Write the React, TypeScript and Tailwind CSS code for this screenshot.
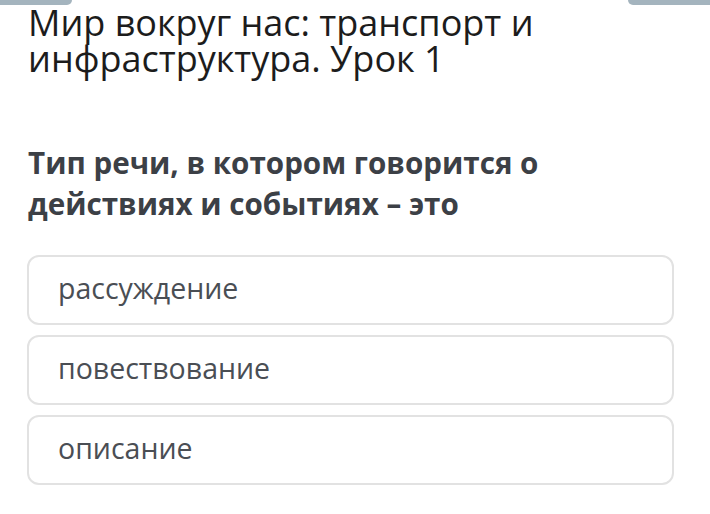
import React from "react";

export default function App() {
  const options = ["рассуждение", "повествование", "описание"];
  return (
    <div className="relative w-[710px] h-[514px] bg-white overflow-hidden" style={{ fontFamily: '"Open Sans", "Noto Sans", sans-serif' }}>
      <div className="absolute left-0 top-0 w-[72px] h-[5px] bg-[#a4b4be] rounded-br-[6px]" />
      <div className="absolute right-0 top-0 w-[82px] h-[5px] bg-[#a4b4be] rounded-bl-[6px]" />
      <div className="pl-[28px] pr-[36px]">
        <h1 className="mt-[5px] text-[36px] leading-[36px] text-[#1c1c1c] font-normal">
          Мир вокруг нас: транспорт и<br />инфраструктура. Урок 1
        </h1>
        <p className="mt-[65px] text-[29.6px] leading-[41px] font-bold text-[#3c4046]">
          Тип речи, в котором говорится о<br />действиях и событиях – это
        </p>
        <div className="mt-[31px] flex flex-col gap-[10px]">
          {options.map((o) => (
            <div key={o} className="h-[70px] w-[647px] -ml-[1px] border-2 border-[#e2e2e2] rounded-[12px] flex items-center pl-[29px] pb-[4px] text-[28.5px] text-[#4a4e54]">
              {o}
            </div>
          ))}
        </div>
      </div>
    </div>
  );
}
